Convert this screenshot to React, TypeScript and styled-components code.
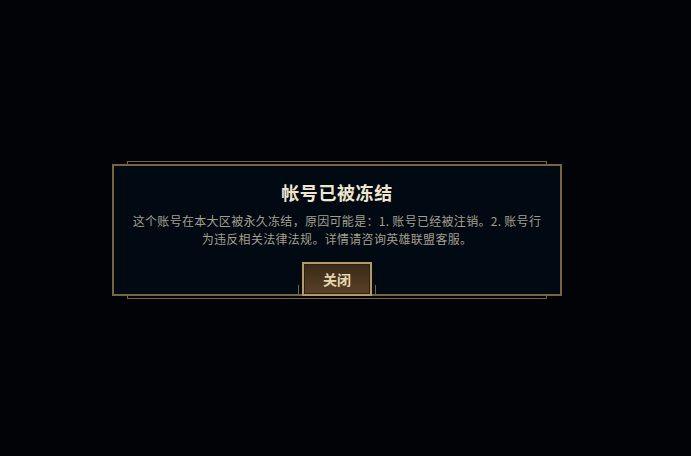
import styled, { createGlobalStyle } from "styled-components";

const GlobalStyle = createGlobalStyle`
  html, body {
    margin: 0;
    padding: 0;
    background: #010306;
  }
`;

const gold = "#78643f";

export default function App() {
  return (
    <>
      <GlobalStyle />
      <Page>
        <Dialog>
          <Title>帐号已被冻结</Title>
          <Message>
            这个账号在本大区被永久冻结，原因可能是：1. 账号已经被注销。2. 账号行为违反相关法律法规。详情请咨询英雄联盟客服。
          </Message>
          <Footer>
            <ButtonFrame>
              <CloseButton>关闭</CloseButton>
            </ButtonFrame>
          </Footer>
        </Dialog>
      </Page>
    </>
  );
}

const Page = styled.div`
  width: 691px;
  height: 456px;
  box-sizing: border-box;
  padding: 164px 0 0 112px;
  overflow: hidden;
`;

const Dialog = styled.div`
  position: relative;
  width: 450px;
  box-sizing: border-box;
  border: 2px solid ${gold};
  background: #010a12;
  display: flex;
  flex-direction: column;
  align-items: center;
  padding: 13px 18px 0;
  font-family: "Noto Sans CJK SC", "Noto Sans", sans-serif;

  &::before,
  &::after {
    content: "";
    position: absolute;
    left: 13px;
    right: 13px;
    height: 2px;
    border: 1px solid ${gold};
  }

  &::before {
    top: -5px;
    border-bottom: none;
  }

  &::after {
    bottom: -5px;
    border-top: none;
  }
`;

const Title = styled.div`
  color: #efe5cf;
  font-size: 18px;
  font-weight: 700;
  line-height: 26px;
  letter-spacing: 0.6px;
`;

const Message = styled.p`
  margin: 7px 0 0;
  max-width: 412px;
  color: #a39e8e;
  font-size: 12px;
  line-height: 18px;
  letter-spacing: 0.3px;
  text-align: center;
`;

const Footer = styled.div`
  display: flex;
  justify-content: center;
  margin-top: 14px;
  margin-bottom: -2px;
`;

const ButtonFrame = styled.div`
  position: relative;
  padding: 0 4px;

  &::before,
  &::after {
    content: "";
    position: absolute;
    bottom: 0;
    width: 1px;
    height: 11px;
    background: ${gold};
  }

  &::before {
    left: 0;
  }

  &::after {
    right: 0;
  }
`;

const CloseButton = styled.button`
  width: 70px;
  height: 34px;
  box-sizing: border-box;
  border: 2px solid #b59a66;
  outline: 1px solid #2a2214;
  outline-offset: -3px;
  background: linear-gradient(180deg, #3a2a19 0%, #5a4127 100%);
  color: #e6d6ad;
  font-family: "Noto Sans CJK SC", "Noto Sans", sans-serif;
  font-size: 14px;
  font-weight: 700;
  cursor: pointer;
  padding: 0;
`;
